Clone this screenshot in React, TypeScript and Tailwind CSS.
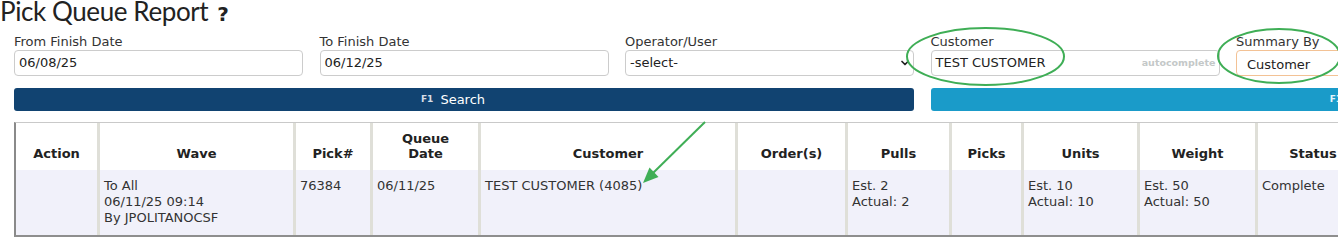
import { ChevronDown } from "lucide-react";

const columns = [
  { key: "action", label: "Action", width: "w-[84px]" },
  { key: "wave", label: "Wave", width: "w-[196px]" },
  { key: "pick", label: "Pick#", width: "w-[77px]" },
  { key: "queue", label: "Queue Date", width: "w-[108px]" },
  { key: "customer", label: "Customer", width: "w-[257px]" },
  { key: "orders", label: "Order(s)", width: "w-[110px]" },
  { key: "pulls", label: "Pulls", width: "w-[104px]" },
  { key: "picks", label: "Picks", width: "w-[72px]" },
  { key: "units", label: "Units", width: "w-[116px]" },
  { key: "weight", label: "Weight", width: "w-[118px]" },
  { key: "status", label: "Status", width: "w-[110px]" },
];

const row: Record<string, string[]> = {
  action: [],
  wave: ["To All", "06/11/25 09:14", "By JPOLITANOCSF"],
  pick: ["76384"],
  queue: ["06/11/25"],
  customer: ["TEST CUSTOMER (4085)"],
  orders: [],
  pulls: ["Est. 2", "Actual: 2"],
  picks: [],
  units: ["Est. 10", "Actual: 10"],
  weight: ["Est. 50", "Actual: 50"],
  status: ["Complete"],
};

function Field({ label, children, className = "" }: { label: string; children: React.ReactNode; className?: string }) {
  return (
    <div className="flex flex-col">
      <label className="h-[14px] leading-[14px] text-[13px] text-[#333] mb-[1px]">{label}</label>
      <div className={`h-[26px] rounded-[4px] border flex items-center text-[13px] text-[#222] ${className}`}>
        {children}
      </div>
    </div>
  );
}

export default function App() {
  return (
    <div className="relative w-[1338px] h-[240px] overflow-hidden bg-white font-['DejaVu_Sans',Verdana,sans-serif]">
      <div className="flex items-baseline -mt-[2px] h-[26px]">
        <h1 className="font-['Lato',sans-serif] text-[26px] tracking-[-0.4px] leading-[26px] text-[#222]">Pick Queue Report</h1>
        <span className="ml-[9px] text-[20px] font-bold text-[#222]">?</span>
      </div>

      <div className="mt-[11px] ml-[14px] grid grid-cols-[289px_289px_289px_289px_289px] gap-x-[16.5px]">
        <Field label="From Finish Date" className="border-[#ccc] px-[4px]">06/08/25</Field>
        <Field label="To Finish Date" className="border-[#ccc] px-[4px]">06/12/25</Field>
        <Field label="Operator/User" className="border-[#ccc] pl-[4px] pr-[2px] justify-between">
          <span>-select-</span>
          <ChevronDown className="size-[12px] text-[#222]" strokeWidth={3.5} />
        </Field>
        <Field label="Customer" className="border-[#ccc] pl-[4px] pr-[3px] justify-between">
          <span>TEST CUSTOMER</span>
          <span className="text-[9.5px] font-bold text-[#c4c8c8]">autocomplete</span>
        </Field>
        <Field label="Summary By" className="border-[#f3c295] pl-[10px] pt-[3px]">Customer</Field>

        <button className="col-span-3 mt-[12px] h-[23px] rounded-[3px] bg-[#114371] text-white flex items-center justify-center gap-[7px] pr-[22px]">
          <span className="text-[9px] font-bold text-[#d6dde6]">F1</span>
          <span className="text-[13px]">Search</span>
        </button>
        <div className="col-span-2">
          <button className="w-[899px] mt-[12px] h-[23px] rounded-[3px] bg-[#1a9bc9] text-white flex items-center justify-center gap-[7px]">
            <span className="text-[9px] font-bold text-[#e3f3f9]">F1</span>
            <span className="text-[13px]">Export Excel</span>
          </button>
        </div>
      </div>

      <div className="mt-[11px] ml-[14px] border-t border-[#c9c9c9] border-l-2 border-l-[#8a8a8a] border-b-2 border-b-[#8e8e8e] w-[1400px]">
        <div className="flex h-[47px] bg-white">
          {columns.map((c, i) => (
            <div
              key={c.key}
              className={`${c.width} shrink-0 flex items-end justify-center pb-[9px] text-center text-[13px] font-bold leading-[15px] text-[#222] ${i < columns.length - 1 ? "border-r-[3px] border-[#dfdfd8]" : ""}`}
            >
              {c.key === "queue" ? (
                <span>Queue<br />Date</span>
              ) : (
                c.label
              )}
            </div>
          ))}
        </div>
        <div className="flex h-[65px] bg-[#f1f1fa]">
          {columns.map((c, i) => (
            <div
              key={c.key}
              className={`${c.width} shrink-0 pt-[8px] pl-[4px] text-[13px] leading-[16px] text-[#333] ${i < columns.length - 1 ? "border-r-[3px] border-[#dfdfd8]" : ""}`}
            >
              {row[c.key].map((line) => (
                <div key={line}>{line}</div>
              ))}
            </div>
          ))}
        </div>
      </div>

      {/* green markup over the screenshot */}
      <svg className="absolute left-0 top-0 pointer-events-none" width="1338" height="240">
        <ellipse cx="985.5" cy="56.5" rx="78.5" ry="28.5" fill="none" stroke="#3fae56" strokeWidth="2" />
        <ellipse cx="1279" cy="56" rx="61" ry="27" fill="none" stroke="#3fae56" strokeWidth="2" />
        <line x1="705" y1="122" x2="652" y2="174" stroke="#3fae56" strokeWidth="2" />
        <polygon points="643,183 658.5,177 649.5,167.5" fill="#3fae56" />
      </svg>
    </div>
  );
}
